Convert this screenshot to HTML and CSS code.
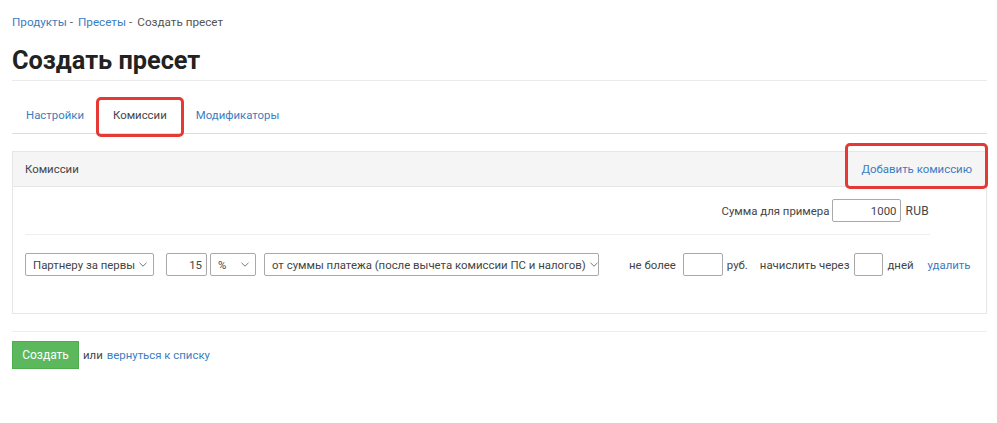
FILE: index.html
```html
<!DOCTYPE html>
<html lang="ru">
<head>
<meta charset="utf-8">
<title>Создать пресет</title>
<link rel="stylesheet" href="styles.css">
</head>
<body>
<div class="page">
  <nav class="crumbs">
    <a href="#">Продукты</a><span class="sep">-</span>
    <a href="#">Пресеты</a><span class="sep">-</span>
    <span class="current">Создать пресет</span>
  </nav>
  <h1 class="title">Создать пресет</h1>

  <ul class="tabs">
    <li class="tab"><a href="#">Настройки</a></li>
    <li class="tab active"><a href="#">Комиссии</a></li>
    <li class="tab"><a href="#">Модификаторы</a></li>
  </ul>

  <section class="panel">
    <div class="panel-head">
      <span class="panel-title">Комиссии</span>
      <a href="#" class="add-link">Добавить комиссию</a>
    </div>
    <div class="panel-body">
      <div class="sample-row">
        <label class="lbl">Сумма для примера</label>
        <span class="input w-sample right">1000</span>
        <span class="lbl rub">RUB</span>
      </div>
      <div class="fee-row">
        <span class="select w-who"><span class="sel-text">Партнеру за первы</span><svg class="chev" width="8" height="5" viewBox="0 0 8 5"><path d="M0.5 0.8l3.5 3.4 3.5-3.4" fill="none" stroke="#777" stroke-width="1"/></svg></span>
        <span class="input w-num right gap-l12">15</span>
        <span class="select w-unit gap-l3"><span class="sel-text">%</span><svg class="chev" width="8" height="5" viewBox="0 0 8 5"><path d="M0.5 0.8l3.5 3.4 3.5-3.4" fill="none" stroke="#777" stroke-width="1"/></svg></span>
        <span class="select w-base gap-l8"><span class="sel-text">от суммы платежа (после вычета комиссии ПС и налогов)</span><svg class="chev" width="8" height="5" viewBox="0 0 8 5"><path d="M0.5 0.8l3.5 3.4 3.5-3.4" fill="none" stroke="#777" stroke-width="1"/></svg></span>
        <span class="lbl gap-l30">не более</span>
        <span class="input w-max gap-l7"></span>
        <span class="lbl gap-l4">руб.</span>
        <span class="lbl gap-l12">начислить через</span>
        <span class="input w-days gap-l5"></span>
        <span class="lbl gap-l4">дней</span>
        <a href="#" class="del-link">удалить</a>
      </div>
    </div>
  </section>

  <div class="actions">
    <button class="btn-create">Создать</button>
    <span class="or">или</span>
    <a href="#">вернуться к списку</a>
  </div>
</div>
</body>
</html>
```

FILE: styles.css
```css
* { box-sizing: border-box; }
html, body { margin: 0; padding: 0; background: #fff; }
body {
  font-family: Roboto, "Liberation Sans", sans-serif;
  font-size: 11.4px;
  color: #444;
}
a { color: #3b7dbf; text-decoration: none; }

.page { padding: 14px 10px 0 12px; }

.crumbs { font-size: 11.7px; line-height: 16px; display: flex; align-items: center; }
.crumbs .sep { margin: 0 5px 0 3px; color: #555; }
.crumbs .current { color: #555; }

.title {
  margin: 0;
  padding: 17px 0 5px;
  font-size: 25.3px;
  line-height: 28px;
  font-weight: 700;
  color: #222;
  border-bottom: 1px solid #eaeaea;
}

.tabs {
  list-style: none;
  margin: 0;
  padding: 0;
  display: flex;
  border-bottom: 1px solid #ddd;
  height: 53px;
  align-items: stretch;
}
.tab { display: flex; align-items: center; padding-top: 17px; }
.tab a { display: block; padding: 10px 14px 11px; line-height: 16px; }
.tab.active { position: relative; }
.tab.active a { color: #444; padding: 10px 15px 11px; }
.tab.active::after {
  content: "";
  position: absolute;
  left: -2px; right: -2px; top: 16px; bottom: -4px;
  border: 3px solid #e53935;
  border-radius: 5px;
}

.panel {
  margin-top: 17px;
  border: 1px solid #e6e6e6;
  height: 163px;
}
.panel-head {
  display: flex;
  justify-content: space-between;
  align-items: center;
  height: 35px;
  background: #f5f5f5;
  border-bottom: 1px solid #e6e6e6;
  padding: 0 14px 0 12px;
}
.add-link { position: relative; }
.add-link::after {
  content: "";
  position: absolute;
  left: -17px; right: -16px; top: -19px; bottom: -13px;
  border: 3px solid #e53935;
  border-radius: 5px;
}

.panel-body { padding: 12px 12px 0 12px; }
.sample-row {
  width: 905px;
  display: flex;
  justify-content: flex-end;
  align-items: center;
  padding-bottom: 12px;
  border-bottom: 1px solid #eee;
}
.sample-row .input { margin: 0 4px 0 3px; }
.rub { font-size: 12px; letter-spacing: 0.3px; padding-right: 1px; }

.lbl { white-space: nowrap; }

.input, .select {
  display: inline-flex;
  align-items: center;
  height: 23px;
  border: 1px solid #a9a9a9;
  border-radius: 2px;
  background: #fff;
  color: #444;
  padding: 0 4px;
}
.right { justify-content: flex-end; }
.select { justify-content: space-between; padding: 0 6px 0 7px; gap: 4px; }
.sel-text { white-space: nowrap; }
.chev { flex: none; }

.w-sample { width: 69px; }
.w-who { width: 129px; }
.w-num { width: 41px; }
.w-unit { width: 46px; }
.w-base { width: 335px; }
.w-max { width: 40px; }
.w-days { width: 29px; }

.fee-row {
  display: flex;
  align-items: center;
  margin-top: 18px;
}
.gap-l3 { margin-left: 3px; }
.gap-l4 { margin-left: 4px; }
.gap-l5 { margin-left: 5px; }
.gap-l7 { margin-left: 7px; }
.gap-l8 { margin-left: 8px; }
.gap-l12 { margin-left: 12px; }
.gap-l30 { margin-left: 30px; }
.del-link { margin-left: 14px; }

.actions {
  margin-top: 17px;
  border-top: 1px solid #eee;
  padding-top: 9px;
  display: flex;
  align-items: center;
}
.btn-create {
  font: inherit;
  font-size: 12px;
  width: 67px;
  height: 28px;
  background: #5cb85c;
  border: 1px solid #4cae4c;
  color: #fff;
  padding: 0;
  border-radius: 0;
}
.or { margin: 0 4px 0 4px; }
```
